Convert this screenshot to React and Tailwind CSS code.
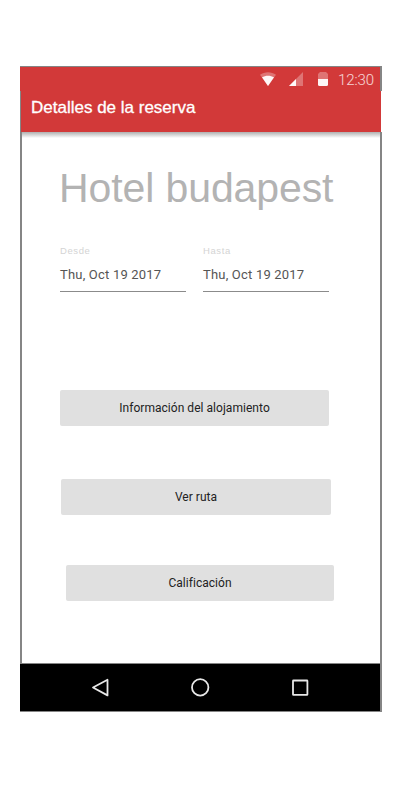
function StatusBar() {
  return (
    <div className="flex h-6 w-[360px] items-center bg-[#d23939] pl-[240px]">
      <svg className="shrink-0" width="84" height="24" viewBox="0 0 84 24" fill="#fff">
        <path d="M0 7.700C4.500 4.300 11.500 4.300 16 7.700L8 19Z" opacity=".3" />
        <path d="M2 10.300C5.500 8.200 10.500 8.200 14 10.300L8 19Z" opacity=".95" />
        <path d="M43 5V19H29Z" opacity=".3" />
        <path d="M36 12V19H29Z" opacity=".95" />
        <path d="M60 5h6l2 2v5H58V7Z" opacity=".3" />
        <path d="M58 12h10v5.500q0 1.500-1.500 1.500h-7q-1.500 0-1.500-1.500Z" opacity=".95" />
      </svg>
      <span className="-ml-1.5 mt-0.5 font-[Roboto,sans-serif] text-[15px] font-light tracking-[-0.1px] text-white/80 whitespace-nowrap">12:30</span>
    </div>
  );
}

function DateField({ label, value }) {
  return (
    <div className="h-[47px] w-[126px] border-b border-[#8b8b8b]">
      <div className="h-3 text-[9.500px] leading-3 tracking-[0.6px] text-[#d4d4d4]">{label}</div>
      <div className="mt-2 whitespace-nowrap font-[Roboto,sans-serif] text-[13px] leading-5 tracking-[0.2px] text-[#555]">{value}</div>
    </div>
  );
}

function Action({ className, children }) {
  return (
    <button className={`block h-9 rounded-[2px] bg-[#e0e0e0] text-center font-[Roboto,sans-serif] text-xs tracking-[0.04px] text-[#222] ${className}`}>
      {children}
    </button>
  );
}

export default function App() {
  return (
    <div className="h-[800px] w-[400px] bg-white pl-5 pt-[66px] font-['Liberation_Sans',Arial,sans-serif]">
      <main className="flex h-[646px] w-[362px] flex-col border-t border-[#858585]">
        <div className="border-r-2 border-[#858585]">
          <StatusBar />
        </div>
        <header className="flex h-[41px] w-[361px] border-l border-[#858585] bg-[#d23939] pl-2.5 pt-[7px]">
          <h1 className="whitespace-nowrap text-[17px] leading-5 text-white [-webkit-text-stroke:0.3px_white]">Detalles de la reserva</h1>
        </header>
        <section className="h-[531px] border-x-2 border-[#858585]">
          <div className="h-[6px] bg-linear-to-b from-[#b0b0b0] to-white" />
          <h2 className="ml-[37px] mt-[26px] h-12 whitespace-nowrap text-[41px] leading-[48px] tracking-[-0.1px] text-[#b3b3b3]">Hotel budapest</h2>
          <div className="ml-[38px] mt-[33px] flex gap-[17px]">
            <DateField label="Desde" value="Thu, Oct 19 2017" />
            <DateField label="Hasta" value="Thu, Oct 19 2017" />
          </div>
          <Action className="ml-[38px] mt-[98px] w-[269px]">Información del alojamiento</Action>
          <Action className="ml-[39px] mt-[53px] w-[270px]">Ver ruta</Action>
          <Action className="ml-11 mt-[50px] w-[268px]">Calificación</Action>
        </section>
        <nav className="flex h-[49px] items-center justify-center border-y border-r-2 border-[#858585] bg-black pb-0.5">
          <svg width="220" height="24" viewBox="0 0 220 24" fill="none" stroke="#e8e8e8" strokeWidth="1.800" strokeLinejoin="round">
            <path d="M17.500 4.800v15.600L3 12.500Z" />
            <circle cx="110.200" cy="12.400" r="8.200" />
            <rect x="203" y="5.500" width="14.400" height="14.400" rx=".5" />
          </svg>
        </nav>
      </main>
    </div>
  );
}
